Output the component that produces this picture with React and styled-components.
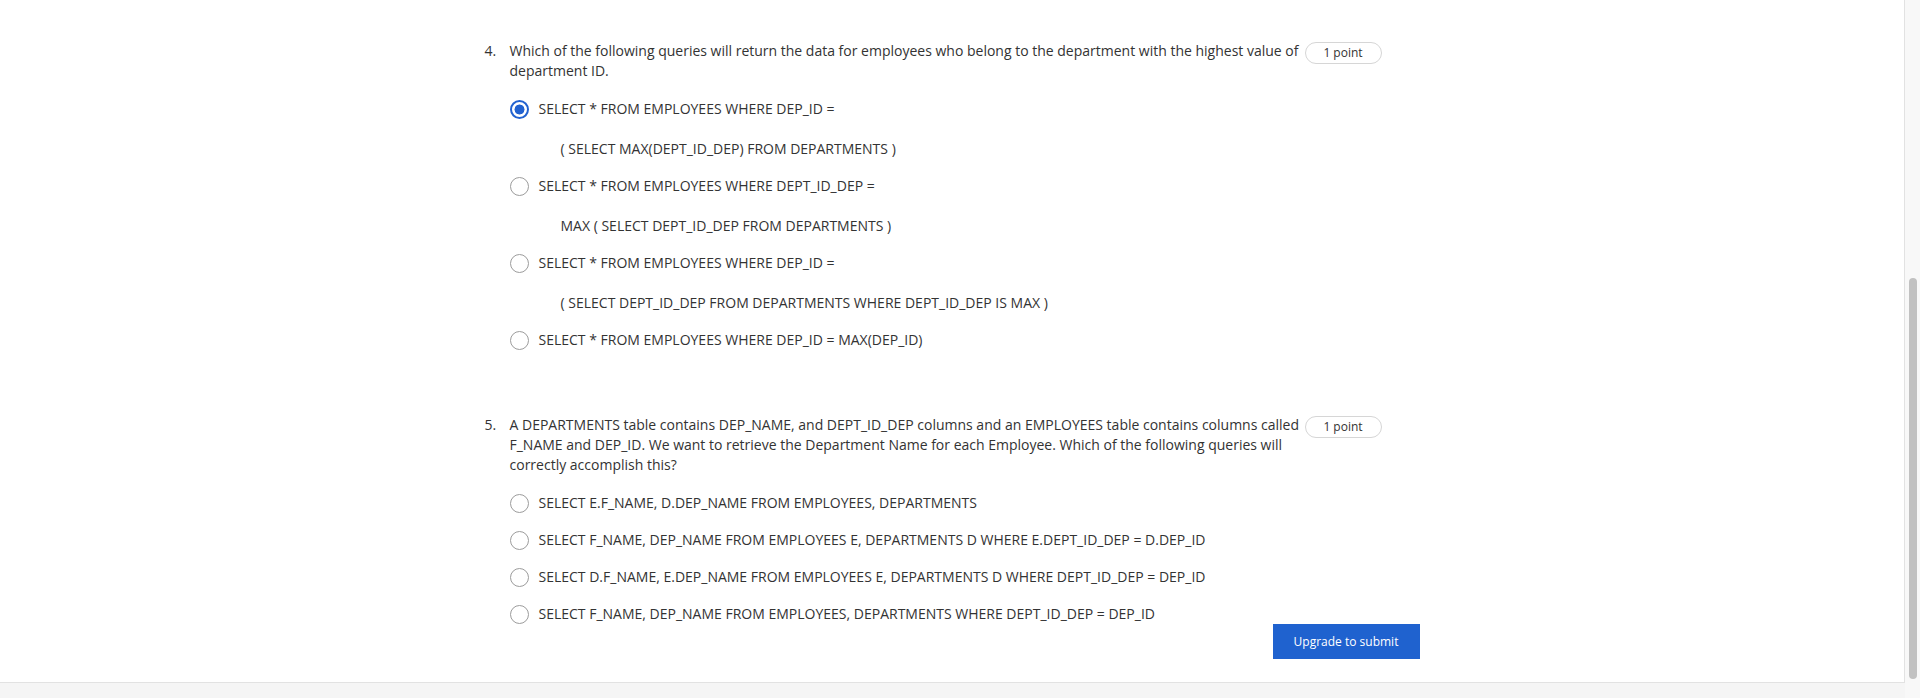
import React from 'react'
import styled, { createGlobalStyle } from 'styled-components'

const GlobalStyle = createGlobalStyle`
  html, body {
    margin: 0;
    padding: 0;
    height: 698px;
    overflow: hidden;
    background: #f5f5f5;
  }
  body {
    font-family: "Open Sans", "Noto Sans", sans-serif;
    color: #333;
  }
`

const questions = [
  {
    number: '4.',
    text: 'Which of the following queries will return the data for employees who belong to the department with the highest value of department ID.',
    options: [
      { main: 'SELECT * FROM EMPLOYEES WHERE DEP_ID =', sub: '( SELECT MAX(DEPT_ID_DEP) FROM DEPARTMENTS )', checked: true },
      { main: 'SELECT * FROM EMPLOYEES WHERE DEPT_ID_DEP =', sub: 'MAX ( SELECT DEPT_ID_DEP FROM DEPARTMENTS )' },
      { main: 'SELECT * FROM EMPLOYEES WHERE DEP_ID =', sub: '( SELECT DEPT_ID_DEP FROM DEPARTMENTS WHERE DEPT_ID_DEP IS MAX )' },
      { main: 'SELECT * FROM EMPLOYEES WHERE DEP_ID = MAX(DEP_ID)' },
    ],
  },
  {
    number: '5.',
    text: 'A DEPARTMENTS table contains DEP_NAME, and DEPT_ID_DEP columns and an EMPLOYEES table contains columns called F_NAME and DEP_ID. We want to retrieve the Department Name for each Employee. Which of the following queries will correctly accomplish this?',
    options: [
      { main: 'SELECT E.F_NAME, D.DEP_NAME FROM EMPLOYEES, DEPARTMENTS' },
      { main: 'SELECT F_NAME, DEP_NAME FROM EMPLOYEES E, DEPARTMENTS D WHERE E.DEPT_ID_DEP = D.DEP_ID' },
      { main: 'SELECT D.F_NAME, E.DEP_NAME FROM EMPLOYEES E, DEPARTMENTS D WHERE DEPT_ID_DEP = DEP_ID' },
      { main: 'SELECT F_NAME, DEP_NAME FROM EMPLOYEES, DEPARTMENTS WHERE DEPT_ID_DEP = DEP_ID' },
    ],
  },
]

export default function App() {
  return (
    <>
      <GlobalStyle />
      <Page>
        <MainColumn>
          <Panel>
            <Quiz>
              {questions.map((q) => (
                <Question key={q.number}>
                  <QuestionRow>
                    <Number>{q.number}</Number>
                    <Prompt>{q.text}</Prompt>
                    <PointPill>1 point</PointPill>
                  </QuestionRow>
                  <Options>
                    {q.options.map((o, i) => (
                      <Option key={i}>
                        <Radio $checked={o.checked} />
                        <OptionBody>
                          <OptionLine>{o.main}</OptionLine>
                          {o.sub && <SubLine>{o.sub}</SubLine>}
                        </OptionBody>
                      </Option>
                    ))}
                  </Options>
                </Question>
              ))}
              <Footer>
                <SubmitButton>Upgrade to submit</SubmitButton>
              </Footer>
            </Quiz>
          </Panel>
          <BottomStrip />
        </MainColumn>
        <ScrollTrack>
          <ScrollThumb />
        </ScrollTrack>
      </Page>
    </>
  )
}

const Page = styled.div`
  display: flex;
  width: 1920px;
  height: 698px;
`

const MainColumn = styled.div`
  flex: 1;
  display: flex;
  flex-direction: column;
`

const Panel = styled.div`
  height: 683px;
  box-sizing: border-box;
  background: #fff;
  border-right: 1px solid #e2e2e2;
  border-bottom: 1px solid #e2e2e2;
  padding-top: 41px;
`

const BottomStrip = styled.div`
  flex: 1;
  background: #f5f5f5;
`

const Quiz = styled.div`
  width: 935px;
  margin: 0 auto;
  display: flex;
  flex-direction: column;
  gap: 65px;
`

const Question = styled.div`
  display: flex;
  flex-direction: column;
  padding-right: 38px;
`

const QuestionRow = styled.div`
  display: flex;
  align-items: flex-start;
  font-size: 14px;
  line-height: 20px;
`

const Number = styled.span`
  width: 25px;
  flex: none;
`

const Prompt = styled.p`
  flex: 1;
  margin: 0;
`

const PointPill = styled.span`
  flex: none;
  margin: 1px 0 0 5px;
  width: 77px;
  height: 22px;
  box-sizing: border-box;
  border: 1px solid #d6d6d6;
  border-radius: 11px;
  font-size: 12px;
  line-height: 20px;
  text-align: center;
  color: #333;
`

const Options = styled.div`
  display: flex;
  flex-direction: column;
  gap: 17px;
  margin-top: 18px;
  padding-left: 25px;
`

const Option = styled.label`
  display: flex;
  align-items: flex-start;
  gap: 10px;
  font-size: 14px;
  line-height: 20px;
  color: #333;
`

const Radio = styled.span`
  flex: none;
  width: 19px;
  height: 19px;
  margin-top: 0.5px;
  box-sizing: border-box;
  border-radius: 50%;
  border: ${(p) => (p.$checked ? '2.5px solid #2262d0' : '1.5px solid #9c9c9c')};
  background: ${(p) =>
    p.$checked ? 'radial-gradient(circle, #2262d0 0 4.8px, #fff 5.2px)' : '#fff'};
`

const OptionBody = styled.div`
  display: flex;
  flex-direction: column;
`

const OptionLine = styled.span``

const SubLine = styled.span`
  margin-top: 20px;
  padding-left: 22px;
`

const Footer = styled.div`
  display: flex;
  justify-content: flex-end;
  margin-top: -65px;
`

const SubmitButton = styled.button`
  width: 147px;
  height: 35px;
  border: none;
  border-radius: 0;
  background: #1f62cf;
  color: #fff;
  font-family: "Open Sans", "Noto Sans", sans-serif;
  font-size: 12px;
  padding: 0;
`

const ScrollTrack = styled.div`
  width: 15px;
  flex: none;
  box-sizing: border-box;
  background: #f8f8f8;
  padding: 278px 3px 0 4px;
`

const ScrollThumb = styled.div`
  width: 8px;
  height: 401px;
  border-radius: 4px;
  background: #c1c1c1;
`
